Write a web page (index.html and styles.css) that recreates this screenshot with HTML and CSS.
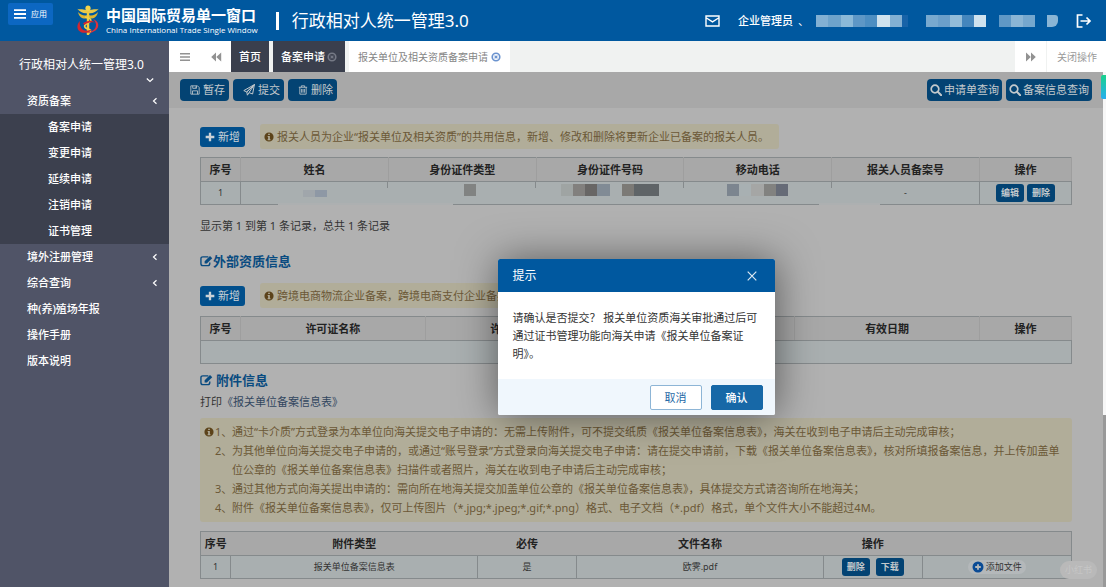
FILE: index.html
```html
<!DOCTYPE html>
<html lang="zh-CN">
<head>
<meta charset="utf-8">
<title>行政相对人统一管理3.0</title>
<link rel="stylesheet" href="styles.css">
</head>
<body>
<svg width="0" height="0" class="defs" aria-hidden="true">
  <symbol id="i-bars" viewBox="0 0 12 12"><path d="M0 1.2h12v1.8H0zM0 5.1h12v1.8H0zM0 9h12v1.8H0z" fill="currentColor"/></symbol>
  <symbol id="i-back" viewBox="0 0 12 12"><path d="M6 1.5v9L1.2 6zM11.200 1.5v9L6.300 6z" fill="currentColor"/></symbol>
  <symbol id="i-fwd" viewBox="0 0 12 12"><path d="M1 1.5v9L5.800 6zM6 1.500v9L10.800 6z" fill="currentColor"/></symbol>
  <symbol id="i-x" viewBox="0 0 12 12"><circle cx="6" cy="6" r="4.500" fill="none" stroke="currentColor" stroke-width="2"/><path d="M4.300 4.300l3.400 3.400M7.700 4.300L4.300 7.700" stroke="currentColor" stroke-width="1.500"/></symbol>
  <symbol id="i-save" viewBox="0 0 12 12"><path d="M1 1h8l2 2v8H1zM3.300 1v3h4.500V1M3 11V7h6v4M6.400 2v1.300" fill="none" stroke="currentColor"/></symbol>
  <symbol id="i-send" viewBox="0 0 12 12"><path d="M11.400.6L.8 6.600l3 1.300zM11.400.6L9.600 10 6 8.600 4.400 11.200 3.800 7.900zM6 8.600l5.400-8" fill="none" stroke="currentColor" stroke-linejoin="round"/></symbol>
  <symbol id="i-trash" viewBox="0 0 12 12"><path d="M1 2.700h10M4 2.700V1h4v1.700M2.200 2.700V11h7.600V2.700M4.300 4.700v4.500M6 4.700v4.500M7.700 4.700v4.500" fill="none" stroke="currentColor"/></symbol>
  <symbol id="i-search" viewBox="0 0 12 12"><circle cx="5" cy="5" r="3.800" fill="none" stroke="currentColor" stroke-width="1.700"/><path d="M7.800 7.800l3.400 3.400" stroke="currentColor" stroke-width="2" stroke-linecap="round"/></symbol>
  <symbol id="i-plus" viewBox="0 0 12 12"><path d="M6 .8v10.400M.8 6h10.400" stroke="currentColor" stroke-width="2.800"/></symbol>
  <symbol id="i-info" viewBox="0 0 12 12"><path fill-rule="evenodd" d="M6 .5a5.500 5.500 0 1 0 0 11a5.500 5.500 0 0 0 0-11zM5 2h2v1.600H5zM4.400 4.700H7V8.600h.8V10H4.300V8.600H5V6h-.6z" fill="currentColor"/></symbol>
  <symbol id="i-edit" viewBox="0 0 14 12"><path d="M9 1.500H3A2 2 0 0 0 1 3.500v5.500a2 2 0 0 0 2 2h5.500a2 2 0 0 0 2-2V7.500" fill="none" stroke="currentColor" stroke-width="1.500"/><path d="M5 8.800V6.400L10.800.6l2.400 2.400-5.800 5.800z" fill="currentColor"/></symbol>
  <symbol id="i-add" viewBox="0 0 12 12"><circle cx="6" cy="6" r="5.500" fill="currentColor"/><path d="M6 3.200v5.600M3.200 6h5.600" stroke="#b4b8ba" stroke-width="1.800"/></symbol>
  <symbol id="i-left" viewBox="0 0 8 8"><path d="M5.500 1.200L2.500 4l3 2.800" fill="none" stroke="currentColor" stroke-width="1.200"/></symbol>
</svg>

<header class="header">
  <button class="apps" type="button"><svg class="ic ic-12"><use href="#i-bars"/></svg>应用</button>
  <svg class="emblem" viewBox="0 0 24 32" aria-hidden="true">
    <path d="M12 8C8.500 9 4 7.500 1 3.500c1 .8 3 1 5 .8L10 5l2-2 2 2 4-.7c2 .2 4 0 5-.8C20 7.500 15.500 9 12 8z" fill="#e9c84a"/>
    <path d="M2 7c2.500 3 6 4 10 3 4 1 7.500 0 10-3-1 5-4.500 7-8 6.500h-4C6.500 14 3 12 2 7z" fill="#e0b52f"/>
    <circle cx="12" cy="3.200" r="2.600" fill="#f2d34b"/>
    <path d="M12 8v22" stroke="#f0cc3c" stroke-width="2.400"/>
    <path d="M9 12c6 1 8 4 3 6s-4 5 0 6 3 4-1 5" fill="none" stroke="#f2cf46" stroke-width="1.600"/>
    <path d="M4 16C-1 21 1.500 28 9 27.800c4-.2 6-1.800 7-3.800-3 2.200-8 2.500-10.500-.5C3.600 21 3.500 18.500 4 16z" fill="#d3262f"/>
    <path d="M17 14c6 2 7 8 2.500 11.500C16 28 12 28.500 9.500 27.500c5 0 9-2 10.200-5.500 1-3-.2-6-2.700-8z" fill="#e0303a"/>
    <path d="M7 18.500c4-3.500 9-3.500 12-1-4-.8-8 0-10.500 2.500z" fill="#d3262f"/>
  </svg>
  <div class="brand">
    <div class="brand-cn">中国国际贸易单一窗口</div>
    <div class="brand-en">China International Trade Single Window</div>
  </div>
  <span class="divider"></span>
  <h1 class="system">行政相对人统一管理3.0</h1>
  <div class="user">
    <svg class="mail" viewBox="0 0 15 12"><path d="M1 1h13v10H1zM1.500 3l6 3.800 6-3.800" fill="none" stroke="currentColor" stroke-width="1.400"/></svg>
    <span class="role">企业管理员</span>
    <span class="comma">、</span>
    <span class="mosaic m-company"></span>
    <span class="mosaic m-name"></span>
    <span class="mosaic m-code"></span>
    <span class="mosaic m-tail"></span>
    <svg class="exit" viewBox="0 0 16 14"><path d="M6.500 1H1.500v12h5M4.500 7h9.500M10.500 3.500L14 7l-3.500 3.500" fill="none" stroke="currentColor" stroke-width="1.700"/></svg>
  </div>
</header>

<div class="shell">
  <nav class="side">
    <div class="side-title">行政相对人统一管理3.0
      <svg class="ic ic-8 down" viewBox="0 0 8 8"><path d="M.8 2.500L4 5.500l3.200-3" fill="none" stroke="currentColor" stroke-width="1.200"/></svg>
    </div>
    <a class="item" href="#">资质备案<svg class="ic ic-8"><use href="#i-left"/></svg></a>
    <div class="sub">
      <a class="item" href="#">备案申请</a>
      <a class="item" href="#">变更申请</a>
      <a class="item" href="#">延续申请</a>
      <a class="item" href="#">注销申请</a>
      <a class="item" href="#">证书管理</a>
    </div>
    <a class="item" href="#">境外注册管理<svg class="ic ic-8"><use href="#i-left"/></svg></a>
    <a class="item" href="#">综合查询<svg class="ic ic-8"><use href="#i-left"/></svg></a>
    <a class="item" href="#">种(养)殖场年报</a>
    <a class="item" href="#">操作手册</a>
    <a class="item" href="#">版本说明</a>
  </nav>

  <div class="main">
    <div class="tabs">
      <button class="tab-tool" type="button" aria-label="菜单"><svg class="ic ic-10"><use href="#i-bars"/></svg></button>
      <button class="tab-tool" type="button" aria-label="向左"><svg class="ic ic-12"><use href="#i-back"/></svg></button>
      <a class="tab dark" href="#">首页</a>
      <a class="tab dark" href="#">备案申请<svg class="ic ic-10 dim"><use href="#i-x"/></svg></a>
      <a class="tab current" href="#">报关单位及相关资质备案申请<svg class="ic ic-10 blue"><use href="#i-x"/></svg></a>
      <button class="tab-tool push" type="button" aria-label="向右"><svg class="ic ic-12"><use href="#i-fwd"/></svg></button>
      <button class="tab-close" type="button">关闭操作</button>
    </div>

    <div class="frame">
      <div class="page">
        <div class="toolbar">
          <button class="btn tool" type="button"><svg class="ic ic-10"><use href="#i-save"/></svg>暂存</button>
          <button class="btn tool" type="button"><svg class="ic ic-12"><use href="#i-send"/></svg>提交</button>
          <button class="btn tool" type="button"><svg class="ic ic-10"><use href="#i-trash"/></svg>删除</button>
          <button class="btn find push" type="button"><svg class="ic ic-12"><use href="#i-search"/></svg>申请单查询</button>
          <button class="btn find" type="button"><svg class="ic ic-12"><use href="#i-search"/></svg>备案信息查询</button>
        </div>

        <div class="content">
          <div class="actions">
            <button class="btn add" type="button"><svg class="ic ic-10"><use href="#i-plus"/></svg>新增</button>
            <p class="note"><svg class="ic ic-10"><use href="#i-info"/></svg>报关人员为企业“报关单位及相关资质”的共用信息，新增、修改和删除将更新企业已备案的报关人员。</p>
          </div>
          <div class="table-wrap">
            <table class="grid people">
              <colgroup><col class="c-no"><col><col><col><col><col><col class="c-op"></colgroup>
              <thead><tr><th>序号</th><th>姓名</th><th>身份证件类型</th><th>身份证件号码</th><th>移动电话</th><th>报关人员备案号</th><th>操作</th></tr></thead>
              <tbody><tr>
                <td class="ruled">1</td>
                <td class="tick"><span class="mosaic t-name"></span></td>
                <td class="tick"><span class="mosaic t-type"></span></td>
                <td class="tick"><span class="mosaic t-id"></span></td>
                <td class="tick"><span class="mosaic t-phone"></span></td>
                <td class="ruled">-</td>
                <td><span class="ops"><button class="btn mini" type="button">编辑</button><button class="btn mini" type="button">删除</button></span></td>
              </tr></tbody>
            </table>
            <span class="smudge smudge-a"></span>
            <span class="smudge smudge-b"></span>
          </div>
          <p class="count">显示第 1 到第 1 条记录，总共 1 条记录</p>

          <h2 class="section"><svg class="edit"><use href="#i-edit"/></svg>外部资质信息</h2>
          <div class="actions second">
            <button class="btn add" type="button"><svg class="ic ic-10"><use href="#i-plus"/></svg>新增</button>
            <p class="note"><svg class="ic ic-10"><use href="#i-info"/></svg>跨境电商物流企业备案，跨境电商支付企业备案</p>
          </div>
          <table class="grid">
            <colgroup><col class="c-no"><col><col><col><col><col class="c-op"></colgroup>
            <thead><tr><th>序号</th><th>许可证名称</th><th>许可证编号</th><th></th><th>有效日期</th><th>操作</th></tr></thead>
            <tbody><tr><td colspan="6"></td></tr></tbody>
          </table>

          <h2 class="section attach"><svg class="edit"><use href="#i-edit"/></svg>附件信息</h2>
          <p class="print">打印<a href="#">《报关单位备案信息表》</a></p>
          <div class="note rules">
            <svg class="ic ic-10"><use href="#i-info"/></svg>
            <ol class="rule-list">
              <li><span>1、</span><span>通过“卡介质”方式登录为本单位向海关提交电子申请的：无需上传附件，可不提交纸质《报关单位备案信息表》，海关在收到电子申请后主动完成审核；</span></li>
              <li><span>2、</span><span>为其他单位向海关提交电子申请的，或通过“账号登录”方式登录向海关提交电子申请：请在提交申请前，下载《报关单位备案信息表》，核对所填报备案信息，并上传加盖单位公章的《报关单位备案信息表》扫描件或者照片，海关在收到电子申请后主动完成审核；</span></li>
              <li><span>3、</span><span>通过其他方式向海关提出申请的：需向所在地海关提交加盖单位公章的《报关单位备案信息表》，具体提交方式请咨询所在地海关；</span></li>
              <li><span>4、</span><span>附件《报关单位备案信息表》，仅可上传图片（*.jpg;*.jpeg;*.gif;*.png）格式、电子文档（*.pdf）格式，单个文件大小不能超过4M。</span></li>
            </ol>
          </div>
          <table class="grid files">
            <colgroup><col class="f-no"><col class="f-type"><col class="f-must"><col class="f-name"><col class="f-op"><col></colgroup>
            <thead><tr><th>序号</th><th>附件类型</th><th>必传</th><th>文件名称</th><th>操作</th><th></th></tr></thead>
            <tbody><tr>
              <td>1</td><td>报关单位备案信息表</td><td>是</td><td>欧霁.pdf</td>
              <td><span class="ops wide"><button class="btn mini" type="button">删除</button><button class="btn mini" type="button">下载</button></span></td>
              <td><button class="upload" type="button"><svg class="ic ic-12"><use href="#i-add"/></svg>添加文件</button></td>
            </tr></tbody>
          </table>
        </div>
      </div>
      <div class="scroll"></div>
      <span class="float-tag"></span>
      <span class="watermark">小红书</span>

      <div class="layer">
        <section class="dialog" role="dialog" aria-labelledby="dlg-title">
          <div class="dialog-head">
            <h2 id="dlg-title">提示</h2>
            <button class="close" type="button" aria-label="关闭"><svg class="ic ic-10" viewBox="0 0 10 10"><path d="M.7.7l8.600 8.600M9.300.7L.7 9.300" stroke="currentColor" stroke-width="1.200"/></svg></button>
          </div>
          <p class="dialog-body">请确认是否提交？ 报关单位资质海关审批通过后可通过证书管理功能向海关申请《报关单位备案证明》。</p>
          <div class="dialog-foot">
            <button class="choice" type="button">取消</button>
            <button class="choice primary" type="button">确认</button>
          </div>
        </section>
      </div>
    </div>
  </div>
</div>
</body>
</html>
```
FILE: styles.css
```css
:root {
  --blue: #00589f;
  --blue-dim: #034373;
  --line: #858a8c;
}
* { box-sizing: border-box; }
body {
  margin: 0;
  min-height: 100vh;
  display: flex;
  flex-direction: column;
  overflow: hidden;
  font: 11px/16px "Noto Sans", "Noto Sans CJK SC", sans-serif;
  color: #333;
}
h1, h2, p, ol { margin: 0; padding: 0; font-weight: 400; }
a { color: inherit; text-decoration: none; }
button { font: inherit; border: 0; margin: 0; padding: 0; }
svg { flex: none; display: block; }
.defs { position: absolute; }
.ic-8 { width: 8px; height: 8px; }
.ic-10 { width: 10px; height: 10px; }
.ic-12 { width: 12px; height: 12px; }
.push { margin-left: auto; }

/* header */
.header {
  display: flex;
  align-items: center;
  height: 41px;
  padding: 0 14px 0 8px;
  background: var(--blue);
  color: #fff;
}
.apps {
  display: flex;
  align-items: center;
  gap: 5px;
  align-self: flex-start;
  height: 22px;
  margin-top: 3px;
  padding: 0 6px;
  border-radius: 2px;
  background: #0c67c2;
  color: #fff;
  font-size: 8px;
}
.emblem { width: 24px; height: 32px; margin: 0 6px 0 23px; }
.brand-cn { font-size: 15px; line-height: 18px; font-weight: 700; }
.brand-en { font-family: "Open Sans", sans-serif; font-size: 8px; line-height: 12px; white-space: nowrap; }
.divider { width: 3px; height: 18px; margin: 0 13px 0 18px; background: #fff; }
.system { font-size: 17px; line-height: 24px; white-space: nowrap; }
.user { display: flex; align-items: center; margin-left: auto; }
.mail { width: 15px; height: 12px; margin-right: 18px; }
.role { font-weight: 500; }
.comma { width: 23px; padding-left: 5px; }
.mosaic { display: block; height: 12px; }
.m-company { width: 92px; margin-right: 18px; background: linear-gradient(90deg, #82b0d3 0 13%, #6ea3cb 13% 27%, #8bb9d8 27% 40%, #5e97c6 40% 53%, #4d8ec2 53% 66%, #cfe2ee 66% 80%, #82b0d3 80% 93%, #1763a8 93%); }
.m-name { width: 60px; margin-right: 13px; background: linear-gradient(90deg, #78a9cf 0 20%, #6b9fca 20% 40%, #92bcd9 40% 60%, #4486bd 60% 80%, #cfe2ee 80%); }
.m-code { width: 36px; margin-right: 12px; background: linear-gradient(90deg, #5f98c6 0 33%, #8ab5d5 33% 66%, #75a7ce 66%); }
.m-tail { width: 11px; margin-right: 18px; border-radius: 0 3px 6px 0; background: #8ab5d5; }
.exit { width: 16px; height: 14px; }

/* side menu */
.shell { display: flex; flex: 1; }
.side { width: 169px; flex: none; background: #505467; color: #fff; }
.side-title { height: 47px; padding: 15px 15px 0 19px; font-size: 12px; line-height: 18px; white-space: nowrap; }
.down { margin: 2px 0 0 auto; }
.item {
  display: flex;
  align-items: center;
  justify-content: space-between;
  height: 26px;
  padding: 0 10px 0 27px;
  font-weight: 500;
}
.sub { background: #3c404e; }
.sub .item { padding-left: 48px; }

/* tabs */
.main { flex: 1; min-width: 0; display: flex; flex-direction: column; }
.tabs { display: flex; height: 31px; background: #f0f2f1; color: #858585; }
.tab-tool { width: 31px; display: grid; place-items: center; background: #fff; color: #929292; }
.tab { display: flex; align-items: center; gap: 3px; padding: 0 9px; white-space: nowrap; }
.dark { gap: 2px; margin-right: 4px; padding: 0 8px; background: #3a3f4d; color: #fff; font-weight: 500; }
.current { background: #fff; font-size: 10px; }
.dim { color: #757985; }
.blue { color: #6b93cf; }
.tab-close { width: 59px; padding-left: 10px; margin-left: 1px; background: #fff; color: #999; font-size: 10px; text-align: left; }

/* page */
.frame { position: relative; display: flex; flex: 1; }
.page { flex: 1; min-width: 0; background: #b1b1b1; }
.scroll { width: 3px; background: linear-gradient(#f7f7f7 0 343px, #999 343px); }
.toolbar { display: flex; gap: 4px; height: 36px; padding: 7px 11px; background: #a8a8a8; }
.btn { display: flex; align-items: center; justify-content: center; border-radius: 4px; white-space: nowrap; background: var(--blue-dim); color: #c3c9cc; }
.tool { gap: 3px; padding: 0 4px 0 10px; }
.find { gap: 2px; padding: 0 3px; }
.content { padding: 16px 31px 9px; }
.actions { display: flex; align-items: center; gap: 15px; }
.add { gap: 3px; height: 20px; padding: 0 5px; border-radius: 3px; background: #014f8c; color: #cbd2d6; }
.note {
  display: flex;
  align-items: center;
  gap: 3px;
  padding: 3px 10px 3px 4px;
  border-radius: 3px;
  background: #b1ad99;
  color: #6b5836;
  line-height: 19px;
}
.note .ic { color: #5c4319; }
.table-wrap { position: relative; margin-top: 8px; }
.grid { width: 100%; table-layout: fixed; border-collapse: collapse; border: 1px solid var(--line); text-align: center; }
.grid th, .grid td { height: 24px; padding: 0; }
.grid td { height: 23px; background: #a9afb0; font-size: 9px; line-height: 14px; }
.grid th { background: #a8a8a8; color: #222; border-right: 1px solid #9e9e9e; border-bottom: 1px solid var(--line); }
.c-no { width: 40px; }
.c-op { width: 92px; }
.ruled { border-right: 1px solid var(--line); }
.tick { background: linear-gradient(var(--line), var(--line)) right top / 1px 6px no-repeat #a9afb0 !important; }
.tick .mosaic { margin: -6px auto 0; }
.t-name { width: 24px; background: linear-gradient(90deg, #a0a6ab 0 50%, #8e98a5 50%); }
.tick .t-name { height: 7px; margin-top: 0; }
.t-type { width: 28px; background: linear-gradient(90deg, transparent 0 16px, #818382 16px); }
.t-id { width: 98px; background: linear-gradient(90deg, #9fa4a3 0 12%, #82807e 12% 25%, #686665 25% 37%, #818b95 37% 50%, transparent 50% 62%, #7c7a76 62% 74%, #5f6467 74%); }
.t-phone { width: 61px; background: linear-gradient(90deg, #7c858f 0 20%, #a8b0b2 20% 40%, #a5a6a5 40% 60%, #828280 60% 80%, #666b77 80%); }
.smudge { position: absolute; bottom: 0; height: 2px; background: #adb0b1; }
.smudge-a { left: 9%; width: 20%; }
.smudge-b { left: 71%; width: 7%; }
.ops { display: flex; justify-content: center; gap: 3px; }
.wide { gap: 6px; }
.mini { width: 28px; height: 18px; border-radius: 3px; font-size: 9px; font-weight: 700; }
.count { margin-top: 13px; }
.section { display: flex; align-items: center; height: 20px; margin-top: 17px; color: #094b80; font-size: 13px; font-weight: 700; }
.edit { width: 13px; height: 12px; }
.second { margin: 12px 0 8px; }
.attach { gap: 3px; margin-top: 6px; }
.print { margin-top: 4px; }
.print a { color: #32465f; }
.rules { align-items: flex-start; gap: 1px; margin: 8px 0 9px; padding: 4px 5px 5px 4px; }
.rules .ic { margin-top: 5px; }
.rule-list { list-style: none; }
.rule-list li { display: grid; grid-template-columns: 17px 1fr; }
.files th { border-right: 0; }
.files td { border-right: 1px solid var(--line); }
.f-no { width: 30px; }
.f-type, .f-name { width: 28.4%; }
.f-must, .f-op { width: 11.3%; }
.upload { display: inline-flex; align-items: center; gap: 2px; height: 14px; padding: 0 4px; border-radius: 7px; background: #b4b8ba; color: #333; vertical-align: middle; }
.upload .ic { color: #0a4b95; }
.float-tag { position: absolute; right: 0; top: 3px; width: 5px; height: 24px; border-radius: 2px 0 0 2px; background: linear-gradient(#19d28c, #27aef0); }
.watermark { position: absolute; right: 9px; bottom: 9px; padding: 0 5px; border-radius: 9px; background: #b9b9b9; color: #c6c6c6; font-size: 9px; line-height: 18px; }

/* dialog */
.layer { position: absolute; inset: 0 3px 0 0; display: flex; align-items: flex-start; justify-content: center; padding-top: 187px; }
.dialog { width: 277px; border-radius: 2px; overflow: hidden; background: #fff; box-shadow: 1px 1px 40px rgba(0, 0, 0, .5); }
.dialog-head { display: flex; align-items: center; justify-content: space-between; height: 33px; padding: 0 18px 0 15px; background: var(--blue); color: #fff; }
.dialog-head h2 { font-size: 12px; }
.close { background: none; color: #dce8f2; }
.dialog-body { padding: 17px 15px 16px; line-height: 18px; }
.dialog-foot { display: flex; justify-content: flex-end; gap: 9px; padding: 6px 12px 5px; background: #f0f7fd; }
.choice { width: 52px; height: 25px; border: 1px solid #8db5d6; border-radius: 2px; background: #fff; color: #1e68a6; }
.primary { border-color: #1768a7; background: #1768a7; color: #fff; font-weight: 500; }
```
